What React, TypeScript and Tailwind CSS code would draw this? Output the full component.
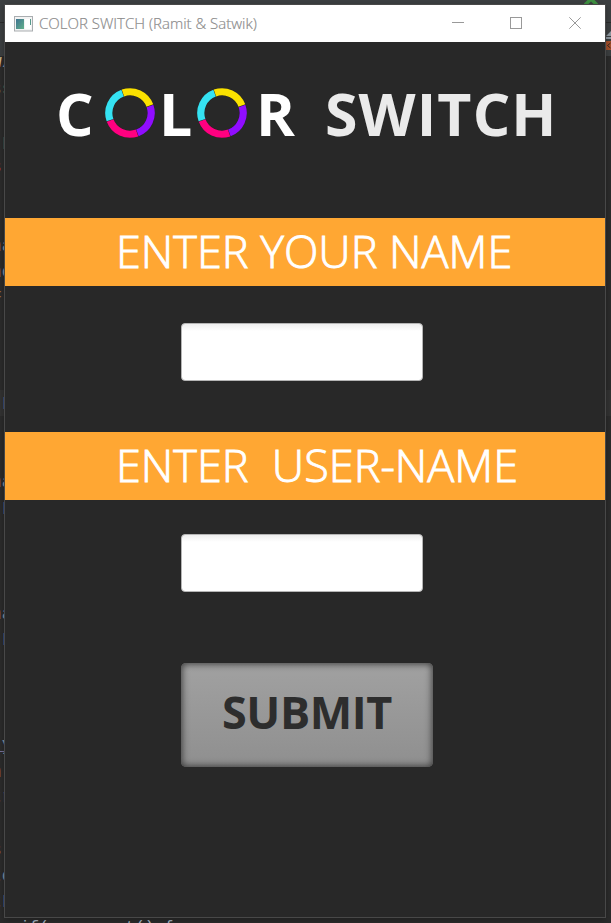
import React from "react";

const SANS = "font-['Open_Sans','Noto_Sans',sans-serif]";

type Line = { top: number; first: string; second: string; tint: string; tint2: string };

const ORANGE = "text-[#96683a]";
const BLUE = "text-[#7f93a5]";
const GREEN = "text-[#5c8452]";

// Ends of the editor's code lines that stay visible left of the window.
const lines: Line[] = [
  { top: 52, first: "w", second: "/", tint: "text-[#c9b08a]", tint2: BLUE },
  { top: 79, first: "s", second: "s", tint: "text-[#6b6a35]", tint2: GREEN },
  { top: 134, first: " ", second: "L", tint: ORANGE, tint2: "text-[#c09a58]" },
  { top: 157, first: "s", second: " ", tint: "text-[#a53c28]", tint2: BLUE },
  { top: 236, first: "n", second: "a", tint: ORANGE, tint2: BLUE },
  { top: 262, first: "n", second: "o", tint: ORANGE, tint2: BLUE },
  { top: 285, first: "=", second: " ", tint: ORANGE, tint2: BLUE },
  { top: 394, first: " ", second: "L", tint: ORANGE, tint2: BLUE },
  { top: 472, first: "n", second: "a", tint: ORANGE, tint2: BLUE },
  { top: 499, first: " ", second: "L", tint: ORANGE, tint2: BLUE },
  { top: 604, first: "n", second: "a", tint: ORANGE, tint2: BLUE },
  { top: 630, first: " ", second: "L", tint: ORANGE, tint2: BLUE },
  { top: 735, first: "_", second: "y", tint: "text-[#8f86a8]", tint2: BLUE },
  { top: 762, first: "n", second: " ", tint: ORANGE, tint2: BLUE },
  { top: 787, first: "t", second: "r", tint: ORANGE, tint2: BLUE },
  { top: 840, first: "s", second: " ", tint: ORANGE, tint2: BLUE },
  { top: 866, first: "t", second: "o", tint: ORANGE, tint2: BLUE },
  { top: 892, first: "t", second: "L", tint: ORANGE, tint2: BLUE },
];

function Backdrop() {
  return (
    <div className="absolute inset-0 overflow-hidden font-['Liberation_Mono',monospace] text-[18px] leading-[20px]">
      <div className="h-[23px] border-b border-[#2b2b2b] bg-[#3c3f41]" />
      <div className="h-[33px] bg-[#3c3f41]" />
      <div className="absolute top-[390px] left-0 h-[26px] w-full bg-[#323232]" />
      {lines.map((l) => (
        <div key={l.top} className="absolute left-[-9px] whitespace-pre" style={{ top: l.top }}>
          <span className={l.tint}>{l.first}</span>
          <span className={l.tint2}>{l.second}</span>
        </div>
      ))}
      <span className="absolute top-[751px] left-0 h-px w-[5px] bg-[#777299]" />
      <span className="absolute top-[918px] left-[20px] text-[16px] whitespace-pre text-[#a9b7c6]">
        {"if(scene.get() {"}
      </span>
      <svg className="absolute top-0 left-[584px]" width="14" height="6" viewBox="0 0 14 6">
        <path d="M1 5 L7 -1 L13 5" fill="none" stroke="#3f9142" strokeWidth="3.5" />
      </svg>
      <svg className="absolute top-[31px] left-[606px]" width="5" height="20" viewBox="0 0 5 20">
        <path d="M0 5 L5 0 V5Z M0 6 H5 V8 H0Z" fill="#8d979f" />
        <path d="M0 10 H5 V19 H0Z" fill="#a6502b" />
        <path d="M4.5 12 L1.5 14.5 L4.5 17" fill="none" stroke="#3a2920" />
      </svg>
    </div>
  );
}

function Ring() {
  const colors = ["#900dff", "#ff0080", "#35e2f2", "#fae100"];
  return (
    <svg width="50" height="50" viewBox="-25 -25 50 50" className="shrink-0">
      <circle r="21.2" fill="none" stroke="#1d1d1d" strokeWidth="7.4" />
      {colors.map((c, i) => (
        <circle
          key={c}
          r="21.2"
          fill="none"
          stroke={c}
          strokeWidth="7.2"
          pathLength={360}
          strokeDasharray="89 271"
          transform={`rotate(${i * 90 - 19.5})`}
        />
      ))}
    </svg>
  );
}

function TitleBar() {
  return (
    <header className="flex h-[37px] items-center bg-white pl-[9px]">
      <svg width="19" height="16" viewBox="0 0 19 16" className="shrink-0">
        <defs>
          <linearGradient id="pane" x1="0" y1="0" x2="1" y2="1">
            <stop offset="0" stopColor="#3e7390" />
            <stop offset="1" stopColor="#62b08a" />
          </linearGradient>
        </defs>
        <rect x="0.5" y="0.5" width="18" height="14.5" fill="#f3f3f3" stroke="#a9adb0" />
        <rect x="2" y="3" width="8" height="10" fill="url(#pane)" />
        <rect x="11" y="3" width="6" height="10" fill="#fff" />
        <rect x="16" y="3" width="1" height="6" fill="#569a8c" />
      </svg>
      <span className="ml-[6px] w-[220px] text-[15px] font-light whitespace-nowrap text-[#8c8c8c] [-webkit-text-stroke:0.2px_#8c8c8c]">
        COLOR SWITCH (Ramit &amp; Satwik)
      </span>
      <svg width="130" height="13" viewBox="0 0 130 13" className="ml-[193px] shrink-0" fill="none" stroke="#999">
        <path d="M0 5.5 H12" />
        <rect x="58.5" y="0.5" width="11" height="11" />
        <path d="M117.3 0.3 L128.7 11.7 M128.7 0.3 L117.3 11.7" />
      </svg>
    </header>
  );
}

function Field({ label }: { label: string }) {
  return (
    <input
      aria-label={label}
      className="ml-[176px] block h-[58px] w-[242px] rounded-[4px] border border-[#b5b5b5] bg-white bg-linear-to-b from-[#eeeeee] to-white to-[7px] px-3 text-2xl outline-none"
    />
  );
}

function Banner({ children }: { children: string }) {
  return (
    <h2 className="h-[68px] bg-[#ffa733] pl-[111px] text-[45px] leading-[65px] font-light whitespace-pre text-white [-webkit-text-stroke:0.9px_white]">
      {children}
    </h2>
  );
}

export default function App() {
  return (
    <div className={`relative h-[923px] w-[611px] overflow-hidden bg-[#2b2b2b] ${SANS}`}>
      <Backdrop />
      <div className="absolute top-[4px] left-[4px] flex h-[914px] w-[602px] flex-col border border-[#484848] bg-[#282828] bg-clip-padding shadow-[0_2px_6px_rgba(0,0,0,0.3)]">
        <TitleBar />
        <main className="flex flex-col">
          <h1 className="flex h-[176px] items-start pt-[46px] text-[59px] leading-[50px] font-bold text-white">
            <span className="ml-[51px] w-[49px]">C</span>
            <Ring />
            <span className="ml-[4px] w-[38px]">L</span>
            <Ring />
            <span className="ml-[9px] w-[69px]">R</span>
            <span className="tracking-[1.1px] whitespace-nowrap text-[#eaeaea]">SWITCH</span>
          </h1>
          <Banner>ENTER YOUR NAME</Banner>
          <div className="pt-[37px] pb-[51px]">
            <Field label="Name" />
          </div>
          <Banner>{"ENTER  USER-NAME"}</Banner>
          <div className="pt-[34px] pb-[71px]">
            <Field label="User name" />
          </div>
          <button className="ml-[176px] h-[104px] w-[252px] rounded-[5px] bg-linear-to-b from-[#a1a1a1] to-[#8f8f8f] pb-[6px] text-[45px] font-bold tracking-[-0.4px] text-[#2d2d2d] shadow-[inset_0_0_7px_1px_#3a3a3a]">
            SUBMIT
          </button>
        </main>
      </div>
    </div>
  );
}
